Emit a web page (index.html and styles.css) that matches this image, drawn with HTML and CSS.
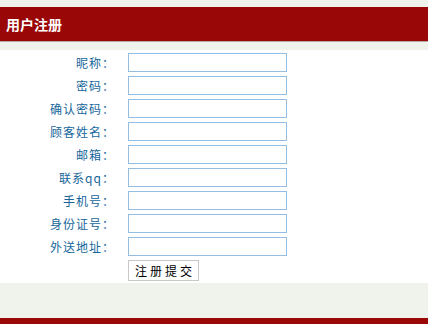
FILE: index.html
```html
<!DOCTYPE html>
<html lang="zh-CN">
<head>
  <meta charset="UTF-8">
  <title>用户注册</title>
  <link rel="stylesheet" href="styles.css">
</head>
<body>
  <!-- 标题栏 -->
  <div class="title-bar">
    <h1>用户注册</h1>
  </div>

  <!-- 注册表单 -->
  <form class="reg-form">
    <label>昵称：</label><input type="text">
    <label>密码：</label><input type="password">
    <label>确认密码：</label><input type="password">
    <label>顾客姓名：</label><input type="text">
    <label>邮箱：</label><input type="text">
    <label>联系qq：</label><input type="text">
    <label>手机号：</label><input type="text">
    <label>身份证号：</label><input type="text">
    <label>外送地址：</label><input type="text">
    <span></span><div><button type="button">注册提交</button></div>
  </form>

  <div class="footer"></div>
</body>
</html>
```

FILE: styles.css
```css
* {
  margin: 0;
  padding: 0;
  box-sizing: border-box;
}

body {
  background-color: #f0f2ec;
  font-family: "Noto Sans CJK SC", "DejaVu Sans", sans-serif;
  padding-top: 7px;
}

/* Title bar */
.title-bar {
  background-color: #9a0707;
  height: 35px;
  border-bottom: 1px solid #b4a8a8;
  margin-bottom: 8px;
}

.title-bar h1 {
  color: #fff;
  font-size: 14px;
  font-weight: bold;
  line-height: 34px;
  padding-left: 6px;
}

/* Form */
.reg-form {
  background-color: #fff;
  display: grid;
  grid-template-columns: 115px 159px;
  grid-template-rows: repeat(9, 19px) 21px;
  column-gap: 13px;
  row-gap: 4px;
  padding: 3px 0 2px;
}

.reg-form label {
  color: #16669a;
  font-size: 12px;
  letter-spacing: 1px;
  line-height: 19px;
  text-align: right;
}

.reg-form input {
  height: 19px;
  border: 1px solid #94bde3;
  outline: none;
  font-size: 12px;
  padding: 0 3px;
}

.reg-form button {
  display: block;
  height: 21px;
  width: 71px;
  background-color: #fff;
  border: 1px solid #c8c8c8;
  color: #000;
  font-family: "Noto Sans CJK SC", sans-serif;
  font-size: 12px;
  letter-spacing: 3px;
  padding-left: 3px;
}

.footer {
  margin-top: 35px;
  height: 6px;
  background-color: #9a0707;
}
```
